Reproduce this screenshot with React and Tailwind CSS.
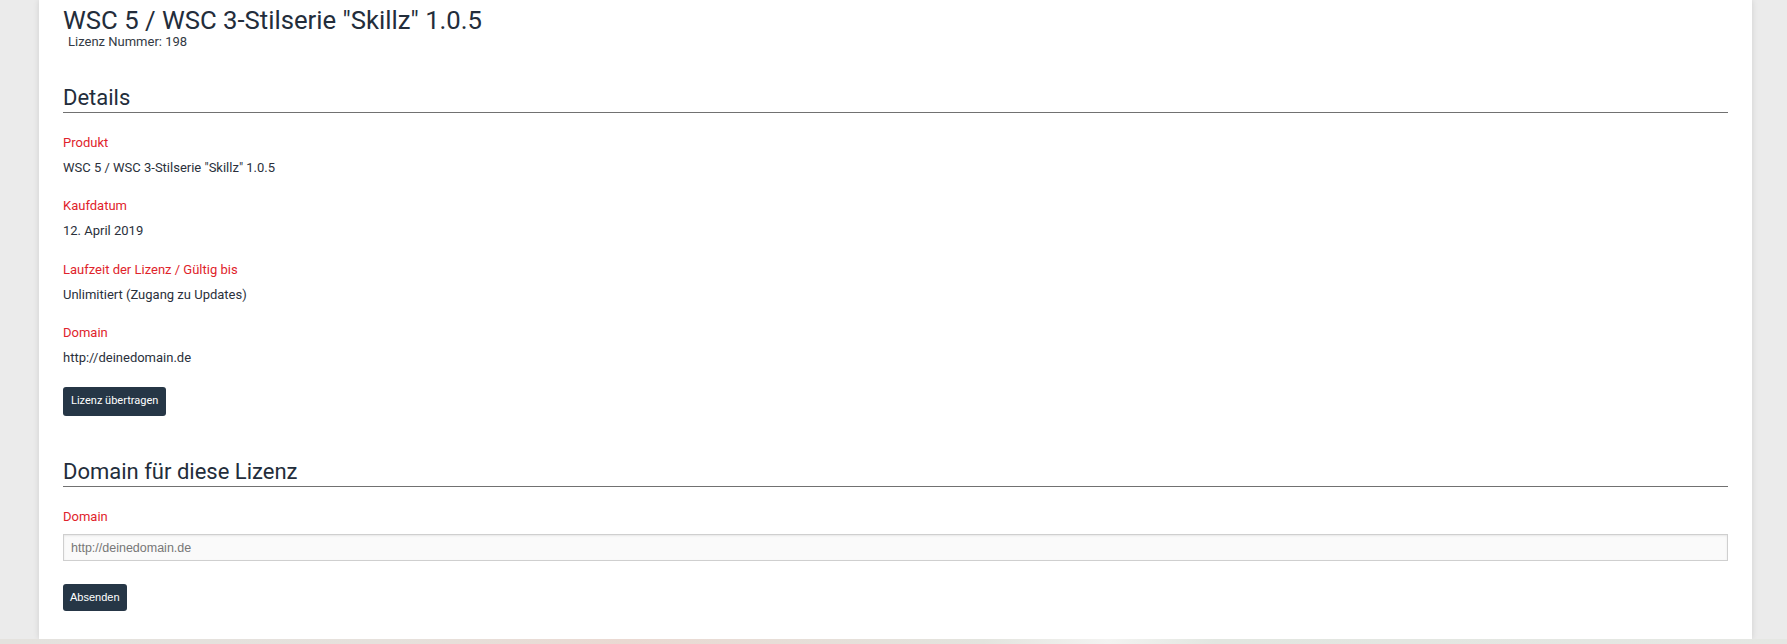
export default function App() {
  const details = [
    { label: 'Produkt', value: 'WSC 5 / WSC 3-Stilserie "Skillz" 1.0.5' },
    { label: 'Kaufdatum', value: '12. April 2019' },
    { label: 'Laufzeit der Lizenz / Gültig bis', value: 'Unlimitiert (Zugang zu Updates)' },
    { label: 'Domain', value: 'http://deinedomain.de' },
  ];

  return (
    <div className="min-h-[644px] w-full bg-[#ebebeb] flex flex-col font-['Roboto',sans-serif] text-[#232d3b]">
      <div className="ml-[39px] w-[1713px] h-[639px] bg-white shadow-[0_0_6px_rgba(0,0,0,0.12)] px-6 pt-[5px]">
        {/* Kopf */}
        <h1 className="text-[25.7px] leading-[30px] font-normal">WSC 5 / WSC 3-Stilserie "Skillz" 1.0.5</h1>
        <div className="text-[13px] leading-[14px] pl-[5px] text-[#333a44]">Lizenz Nummer: 198</div>

        {/* Details */}
        <h2 className="mt-[35.5px] text-[22px] leading-[26px] pb-[1px] border-b border-[#717171]">Details</h2>
        <div className="pt-[20px]">
          {details.map((d) => (
            <div key={d.label} className="mb-[18.5px]">
              <div className="text-[13px] leading-[20px] text-[#e0232b]">{d.label}</div>
              <div className="mt-[5px] text-[13px] leading-[20px] text-[#2a303b]">{d.value}</div>
            </div>
          ))}
        </div>
        <button className="h-[29px] px-2 rounded-[3px] bg-[#263646] text-white text-[11px] font-['Roboto',sans-serif]">
          Lizenz übertragen
        </button>

        {/* Domain fuer diese Lizenz */}
        <h2 className="mt-[43px] text-[22px] leading-[26px] pb-[1px] border-b border-[#717171]">Domain für diese Lizenz</h2>
        <div className="pt-[20.5px] text-[13px] leading-[20px] text-[#e0232b]">Domain</div>
        <input
          type="text"
          placeholder="http://deinedomain.de"
          className="mt-[7px] block w-full h-[27px] px-[7px] bg-[#fafafa] border border-[#cfcfcf] shadow-[inset_0_1px_2px_rgba(0,0,0,0.08)] text-[12.5px] font-['Liberation_Sans',Arial,sans-serif] placeholder:text-[#777] outline-none"
        />
        <button className="mt-[22.5px] h-[27px] px-[7px] rounded-[3px] bg-[#263646] text-white text-[11px] font-['Liberation_Sans',Arial,sans-serif]">
          Absenden
        </button>
      </div>
      <div className="h-[5px] w-full bg-[linear-gradient(90deg,#e4e2de_0%,#e6e1dc_22%,#ead9d2_35%,#e3e4de_55%,#f3f3f1_62%,#e2e6e0_68%,#e5e7e3_100%)]" />
    </div>
  );
}
